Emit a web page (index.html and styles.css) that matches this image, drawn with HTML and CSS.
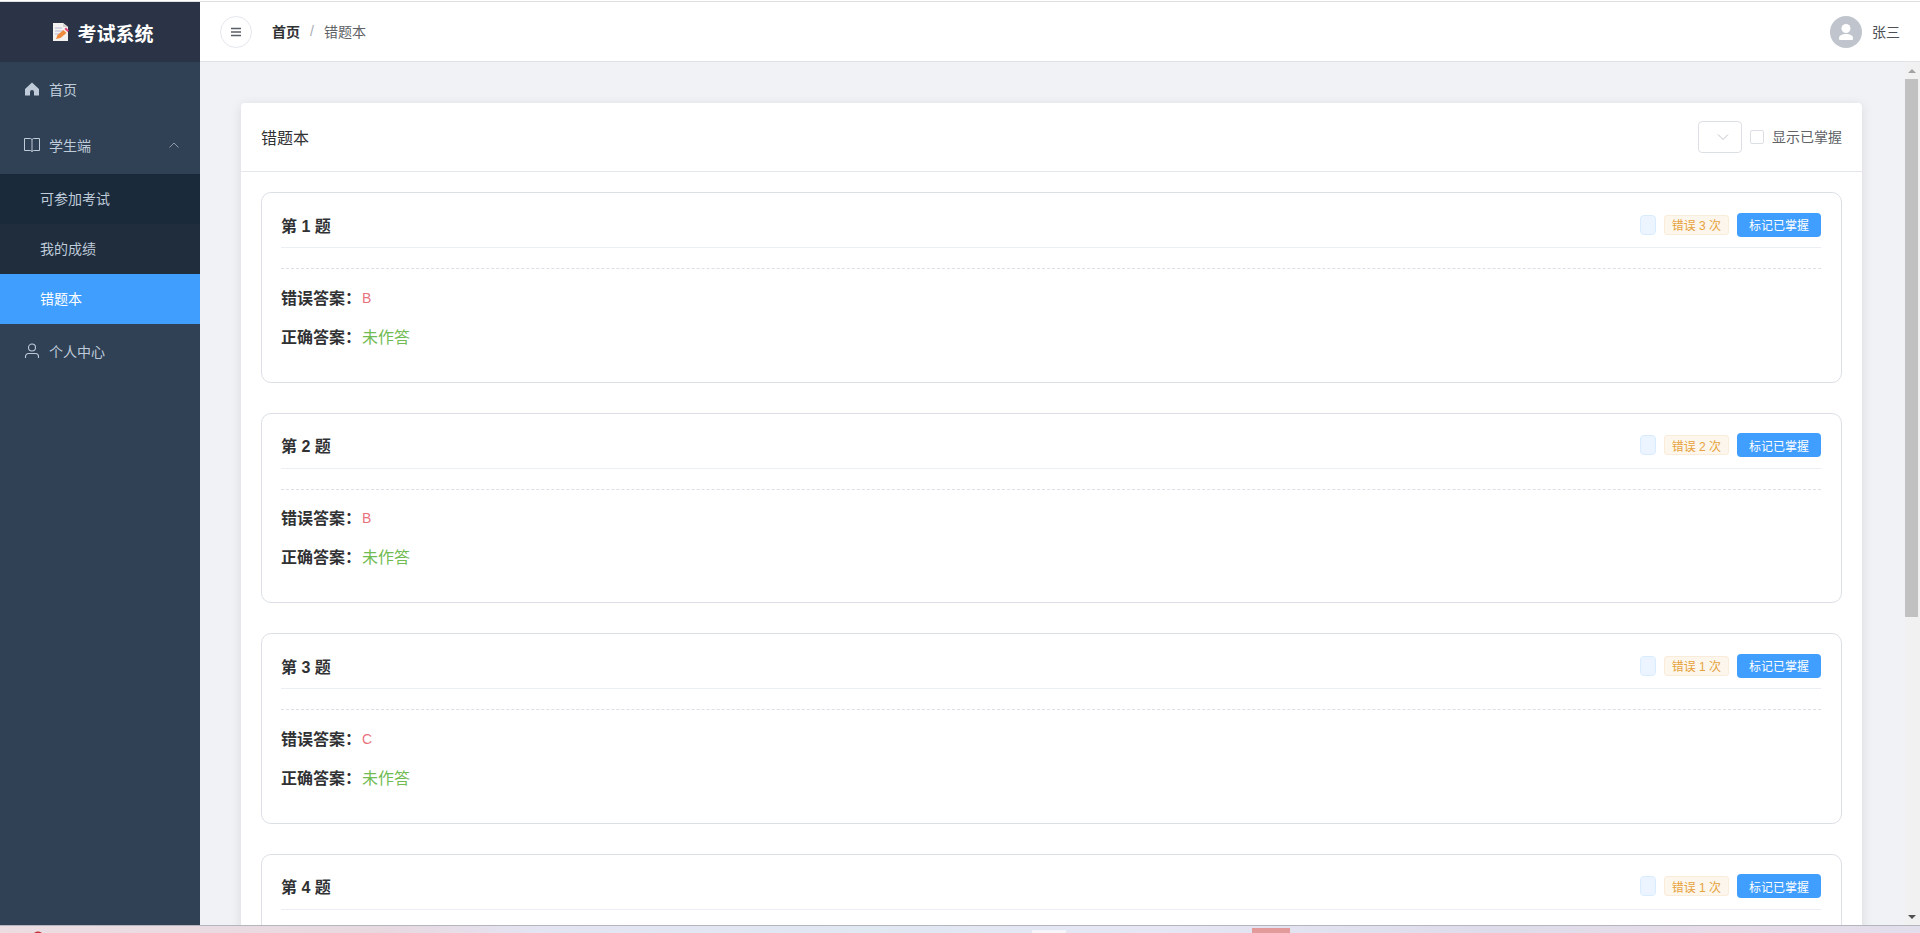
FILE: index.html
```html
<!DOCTYPE html>
<html lang="zh-CN">
<head>
    <meta charset="UTF-8">
    <meta name="viewport" content="width=device-width, initial-scale=1.0">
    <title>考试系统 - 错题本</title>
    <link rel="stylesheet" href="styles.css">
</head>
<body>
    <div class="app">
        <aside class="sidebar">
            <div class="logo">
                <svg class="logo-icon" viewBox="0 0 18 20" width="18" height="20">
                    <path d="M1 1h10l5 4v14H1z" fill="#f4f2f0"/>
                    <path d="M11 1l5 4h-5z" fill="#d8d4d0"/>
                    <path d="M3 6h7M3 9h8M3 12h4" stroke="#b9b6d6" stroke-width="1.2"/>
                    <path d="M4 17l1.5-4 6-5 3 3-6 5z" fill="#f08a3c"/>
                    <path d="M12.5 7l1.500-1.500 3 3L15.500 10z" fill="#e0457a"/>
                </svg>
                <span class="logo-text">考试系统</span>
            </div>
            <nav class="menu">
                <a class="menu-item">
                    <svg class="menu-icon" viewBox="0 0 16 16"><path d="M8 1.500 1 8v6.500h5V11a2 2 0 0 1 4 0v3.500h5V8z" fill="#bfcbd9"/></svg>
                    <span>首页</span>
                </a>
                <a class="menu-item">
                    <svg class="menu-icon" viewBox="0 0 16 16" fill="none" stroke="#bfcbd9" stroke-width="1"><path d="M.5 1.500h6L8 2.500l1.500-1h6v12h-6l-1.500 1-1.500-1h-6zM8 2.500v12"/></svg>
                    <span>学生端</span>
                    <svg class="menu-arrow" viewBox="0 0 10 6" fill="none" stroke="#909aa8" stroke-width="1"><path d="M.5 5.500 5 1l4.500 4.500"/></svg>
                </a>
                <div class="submenu">
                    <a class="submenu-item first">可参加考试</a>
                    <a class="submenu-item">我的成绩</a>
                    <a class="submenu-item active">错题本</a>
                </div>
                <a class="menu-item">
                    <svg class="menu-icon" viewBox="0 0 16 16" fill="none" stroke="#bfcbd9" stroke-width="1.100"><circle cx="8" cy="4.500" r="3.500"/><path d="M1.500 15v-1.500a3 3 0 0 1 3-3h7a3 3 0 0 1 3 3V15"/></svg>
                    <span>个人中心</span>
                </a>
            </nav>
        </aside>

        <div class="right">
            <header class="navbar">
                <button class="toggle">
                    <svg viewBox="0 0 12 10" width="12" height="10" fill="none" stroke="#5a5e66" stroke-width="1.400"><path d="M1 1.500h10M1 5h10M1 8.500h10"/></svg>
                </button>
                <div class="breadcrumb">
                    <span class="crumb-home">首页</span>
                    <span class="crumb-sep">/</span>
                    <span class="crumb-now">错题本</span>
                </div>
                <div class="user">
                    <span class="avatar">
                        <svg viewBox="0 0 32 32" width="32" height="32"><circle cx="16" cy="12.500" r="4.500" fill="#fff"/><path d="M9 22.500c0-3 2.500-4.500 7-4.500s7 1.500 7 4.500c0 1-.5 1.500-1.500 1.500h-11C9.500 24 9 23.500 9 22.500z" fill="#fff"/></svg>
                    </span>
                    <span class="user-name">张三</span>
                </div>
            </header>

            <div class="body-row">
                <main class="content">
                    <section class="panel">
                        <div class="panel-head">
                            <span class="panel-title">错题本</span>
                            <div class="panel-tools">
                                <div class="select">
                                    <svg viewBox="0 0 12 8" width="12" height="8" fill="none" stroke="#c0c4cc" stroke-width="1"><path d="M1 1.500l5 5 5-5"/></svg>
                                </div>
                                <label class="check"><span class="check-box"></span><span class="check-label">显示已掌握</span></label>
                            </div>
                        </div>
                        <div class="panel-body">
                            <article class="question">
                                <div class="q-head">
                                    <span class="q-title">第 1 题</span>
                                    <div class="q-tools">
                                        <span class="tag-blue"></span>
                                        <span class="tag-orange">错误 3 次</span>
                                        <button class="btn-mark">标记已掌握</button>
                                    </div>
                                </div>
                                <hr class="q-dash">
                                <p class="q-line"><b>错误答案：</b><span class="wrong">B</span></p>
                                <p class="q-line"><b>正确答案：</b><span class="right-answer">未作答</span></p>
                            </article>
                            <article class="question">
                                <div class="q-head">
                                    <span class="q-title">第 2 题</span>
                                    <div class="q-tools">
                                        <span class="tag-blue"></span>
                                        <span class="tag-orange">错误 2 次</span>
                                        <button class="btn-mark">标记已掌握</button>
                                    </div>
                                </div>
                                <hr class="q-dash">
                                <p class="q-line"><b>错误答案：</b><span class="wrong">B</span></p>
                                <p class="q-line"><b>正确答案：</b><span class="right-answer">未作答</span></p>
                            </article>
                            <article class="question">
                                <div class="q-head">
                                    <span class="q-title">第 3 题</span>
                                    <div class="q-tools">
                                        <span class="tag-blue"></span>
                                        <span class="tag-orange">错误 1 次</span>
                                        <button class="btn-mark">标记已掌握</button>
                                    </div>
                                </div>
                                <hr class="q-dash">
                                <p class="q-line"><b>错误答案：</b><span class="wrong">C</span></p>
                                <p class="q-line"><b>正确答案：</b><span class="right-answer">未作答</span></p>
                            </article>
                            <article class="question">
                                <div class="q-head">
                                    <span class="q-title">第 4 题</span>
                                    <div class="q-tools">
                                        <span class="tag-blue"></span>
                                        <span class="tag-orange">错误 1 次</span>
                                        <button class="btn-mark">标记已掌握</button>
                                    </div>
                                </div>
                            </article>
                        </div>
                    </section>
                </main>
                <div class="scrollbar">
                    <span class="scroll-up"></span>
                    <span class="scroll-thumb"></span>
                    <span class="scroll-down"></span>
                </div>
            </div>
        </div>
    </div>
    <div class="taskbar"></div>
</body>
</html>
```
FILE: styles.css
```css
* {
    box-sizing: border-box;
}
html, body {
    height: 100%;
}
body {
    margin: 0;
    display: flex;
    flex-direction: column;
    overflow: hidden;
    font-family: "Liberation Sans", "Noto Sans CJK SC", sans-serif;
    font-size: 14px;
    color: #303133;
    background-color: #fff;
}
.app {
    flex: 1;
    min-height: 0;
    display: flex;
    margin-top: 2px;
    box-shadow: 0 -1px 0 #e0e0e0;
}
.sidebar {
    width: 200px;
    flex-shrink: 0;
    background-color: #304156;
}
.logo {
    height: 60px;
    padding-left: 6px;
    background-color: #2a3446;
    display: flex;
    align-items: center;
    justify-content: center;
    gap: 7px;
}
.logo-text {
    font-size: 19px;
    font-weight: bold;
    color: #fff;
}
.menu-item {
    height: 56px;
    padding: 0 20px 2px 24px;
    display: flex;
    align-items: center;
    gap: 9px;
    color: #bfcbd9;
}
.menu-icon {
    width: 16px;
    height: 16px;
}
.menu-arrow {
    width: 10px;
    height: 6px;
    margin-left: auto;
    margin-right: 1px;
}
.submenu {
    background-color: #1f2d3d;
}
.submenu-item {
    height: 50px;
    padding: 0 0 2px 40px;
    display: flex;
    align-items: center;
    color: #bfcbd9;
}
.submenu-item.first {
    background-color: #1b2a3b;
}
.submenu-item.active {
    background-color: #409eff;
    color: #fff;
}
.right {
    flex: 1;
    min-width: 0;
    display: flex;
    flex-direction: column;
}
.navbar {
    height: 60px;
    flex-shrink: 0;
    padding: 0 20px;
    display: flex;
    align-items: center;
    background-color: #fff;
    border-bottom: 1px solid #dfe2e6;
}
.toggle {
    width: 32px;
    height: 32px;
    padding: 0;
    border: 1px solid #e4e7ed;
    border-radius: 50%;
    background-color: #fff;
    display: flex;
    align-items: center;
    justify-content: center;
}
.breadcrumb {
    margin-left: 20px;
    padding-bottom: 2px;
    display: flex;
    align-items: center;
    gap: 10px;
}
.crumb-home {
    font-weight: bold;
}
.crumb-sep {
    color: #a8abb2;
}
.crumb-now {
    color: #606266;
}
.user {
    margin-left: auto;
    display: flex;
    align-items: center;
    gap: 10px;
}
.avatar {
    width: 32px;
    height: 32px;
    border-radius: 50%;
    background-color: #c0c4cc;
    display: block;
}
.avatar svg {
    display: block;
}
.user-name {
    padding-bottom: 2px;
    color: #4c4f55;
}
.body-row {
    flex: 1;
    min-height: 0;
    display: flex;
    background-color: #f0f2f5;
}
.content {
    flex: 1;
    min-width: 0;
    overflow: hidden;
    padding: 41px 43px 0 41px;
}
.panel {
    background-color: #fff;
    border-radius: 4px;
    box-shadow: 0 2px 12px rgba(0, 0, 0, 0.1);
}
.panel-head {
    height: 69px;
    padding: 0 20px;
    display: flex;
    align-items: center;
    justify-content: space-between;
    border-bottom: 1px solid #e4e7ed;
}
.panel-title {
    font-size: 16px;
}
.panel-tools {
    display: flex;
    align-items: center;
    gap: 8px;
}
.select {
    width: 44px;
    height: 32px;
    padding-left: 6px;
    border: 1px solid #dcdfe6;
    border-radius: 4px;
    display: flex;
    align-items: center;
    justify-content: center;
}
.check {
    display: flex;
    align-items: center;
    gap: 8px;
    color: #606266;
}
.check-box {
    width: 14px;
    height: 14px;
    border: 1px solid #dcdfe6;
    border-radius: 2px;
}
.check-label {
    margin-bottom: 2px;
}
.panel-body {
    padding: 20px;
    display: flex;
    flex-direction: column;
    gap: 30px;
}
.question {
    height: 190.6px;
    flex-shrink: 0;
    padding: 0 20px 0 19px;
    border: 1px solid #dcdfe6;
    border-radius: 10px;
}
.q-head {
    height: 55px;
    padding-top: 9px;
    display: flex;
    align-items: center;
    justify-content: space-between;
    border-bottom: 1px solid #ebeef5;
}
.q-title {
    font-size: 16px;
    font-weight: bold;
}
.q-tools {
    display: flex;
    align-items: center;
    gap: 8px;
}
.tag-blue {
    width: 16px;
    height: 20px;
    border: 1px solid #d9ecff;
    border-radius: 4px;
    background-color: #ecf5ff;
}
.tag-orange {
    height: 20px;
    padding: 0 7px;
    display: flex;
    align-items: center;
    font-size: 12px;
    color: #e6a23c;
    border: 1px solid #faecd8;
    border-radius: 3px;
    background-color: #fdf6ec;
}
.btn-mark {
    width: 84px;
    height: 24px;
    padding: 0;
    border: none;
    border-radius: 4px;
    font-family: inherit;
    font-size: 12px;
    color: #fff;
    background-color: #409eff;
}
.q-dash {
    margin: 20px 0 0;
    border: none;
    border-top: 1px dashed #dcdfe6;
}
.q-line {
    margin: 0;
    height: 39px;
    display: flex;
    align-items: center;
    font-size: 16px;
}
.q-dash + .q-line {
    margin-top: 8px;
}
.wrong {
    padding: 2px 0 0 1px;
    font-size: 14px;
    color: #e9737d;
}
.right-answer {
    padding-left: 1px;
    color: #70bb52;
}
.scrollbar {
    width: 15px;
    flex-shrink: 0;
    padding-right: 2px;
    background-color: #f1f1f1;
    display: flex;
    flex-direction: column;
    align-items: stretch;
}
.scroll-up, .scroll-down {
    height: 17px;
    flex-shrink: 0;
    display: flex;
    justify-content: center;
    align-items: center;
}
.scroll-up::before {
    content: "";
    border: 4px solid transparent;
    border-top: none;
    border-bottom: 4px solid #a3a3a3;
}
.scroll-down {
    margin-top: auto;
}
.scroll-down::before {
    content: "";
    border: 4px solid transparent;
    border-bottom: none;
    border-top: 4px solid #505050;
}
.scroll-thumb {
    height: 538px;
    background-color: #c1c1c1;
}
.taskbar {
    height: 8px;
    flex-shrink: 0;
    border-top: 1px solid #b5b5bd;
    background:
        radial-gradient(circle 6px at 38px 11px, #c8323c 5px, transparent 6px),
        linear-gradient(#f6f6fa, #f6f6fa) 1032px 4px / 34px 3px no-repeat,
        linear-gradient(#e29a9a, #e29a9a) 1252px 2px / 38px 5px no-repeat,
        linear-gradient(90deg, #ecdde3 0, #e8d8e0 20%, #e4e4f2 28%, #e0e8f2 45%, #e6e6f4 60%, #dedcea 78%, #e8dce8 90%, #e2deec 100%);
}
```
